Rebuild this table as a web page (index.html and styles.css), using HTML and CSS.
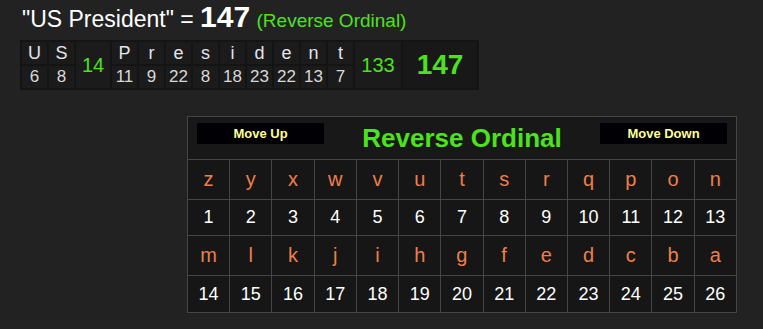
FILE: index.html
```html
<!DOCTYPE html>
<html>
<head>
<meta charset="utf-8">
<link rel="stylesheet" href="styles.css">
</head>
<body>
<div class="page">
  <h1 class="headline">"US President" = <b class="total">147</b> <span class="cipher">(Reverse Ordinal)</span></h1>
  <table class="breakdown">
    <tr class="chars">
      <td>U</td><td>S</td><td class="sum" rowspan="2">14</td>
      <td>P</td><td>r</td><td>e</td><td>s</td><td>i</td><td>d</td><td>e</td><td>n</td><td>t</td>
      <td class="sum wide" rowspan="2">133</td>
      <td class="grand" rowspan="2">147</td>
    </tr>
    <tr class="vals">
      <td>6</td><td>8</td>
      <td>11</td><td>9</td><td>22</td><td>8</td><td>18</td><td>23</td><td>22</td><td>13</td><td>7</td>
    </tr>
  </table>

  <table class="chart">
    <tr>
      <td colspan="13" class="head">
        <div class="headbar">
          <span class="btn">Move Up</span>
          <span class="title">Reverse Ordinal</span>
          <span class="btn">Move Down</span>
        </div>
      </td>
    </tr>
    <tr class="letters r1">
      <td>z</td><td>y</td><td>x</td><td>w</td><td>v</td><td>u</td><td>t</td><td>s</td><td>r</td><td>q</td><td>p</td><td>o</td><td>n</td>
    </tr>
    <tr class="nums r2">
      <td>1</td><td>2</td><td>3</td><td>4</td><td>5</td><td>6</td><td>7</td><td>8</td><td>9</td><td>10</td><td>11</td><td>12</td><td>13</td>
    </tr>
    <tr class="letters r3">
      <td>m</td><td>l</td><td>k</td><td>j</td><td>i</td><td>h</td><td>g</td><td>f</td><td>e</td><td>d</td><td>c</td><td>b</td><td>a</td>
    </tr>
    <tr class="nums r4">
      <td>14</td><td>15</td><td>16</td><td>17</td><td>18</td><td>19</td><td>20</td><td>21</td><td>22</td><td>23</td><td>24</td><td>25</td><td>26</td>
    </tr>
  </table>
</div>
</body>
</html>
```

FILE: styles.css
```css
html, body {
  margin: 0;
  padding: 0;
  background: #222222;
  font-family: "Liberation Sans", Arial, sans-serif;
  color: #ffffff;
}

.page {
  padding: 2px 0 0 20px;
}

.headline {
  margin: 0 0 0 2px;
  font-weight: normal;
  font-size: 23px;
  line-height: 30px;
  color: #ffffff;
}

.total {
  font-size: 30px;
  font-weight: bold;
}

.cipher {
  font-size: 19px;
  color: #4ce21c;
}

.breakdown {
  margin-top: 4px;
  border-collapse: separate;
  border-spacing: 2px;
  background: #141414;
}

.breakdown td {
  background: #1b1b1b;
  text-align: center;
  padding: 0;
  height: 22px;
  width: 25px;
  font-size: 17px;
  line-height: 22px;
}

.breakdown .chars td {
  color: #e4e4ea;
  font-size: 18px;
}

.breakdown .vals td {
  color: #d8d8d8;
}

.breakdown td.sum {
  width: 34px;
  color: #4ce21c;
  font-size: 20px;
}

.breakdown td.wide {
  width: 46px;
}

.breakdown td.grand {
  width: 74px;
  background: #181818;
  color: #4ce21c;
  font-size: 28px;
  font-weight: bold;
}

.chart {
  margin: 26px 0 0 167px;
  width: 550px;
  table-layout: fixed;
  border-collapse: collapse;
  background: #161616;
  border: 1px solid #454545;
}

.chart td {
  border: 1px solid #454545;
  text-align: center;
  padding: 0;
}

.chart td.head {
  height: 42px;
  background: #181818;
}

.headbar {
  display: flex;
  align-items: center;
  justify-content: space-between;
  padding: 0 9px 0 9px;
}

.btn {
  width: 127px;
  height: 21px;
  background: #000005;
  color: #ffff99;
  font-size: 13px;
  font-weight: bold;
  line-height: 21px;
  text-align: center;
  position: relative;
  top: -5px;
}

.title {
  flex: 1;
  color: #4ce21c;
  font-size: 26px;
  font-weight: bold;
  text-align: center;
}

.letters td {
  color: #ee7f4a;
  font-size: 20px;
}

.nums td {
  color: #ffffff;
  font-size: 18px;
}

.r1 td { height: 39px; }
.r2 td { height: 35px; }
.r3 td { height: 39px; }
.r4 td { height: 36px; }
```
